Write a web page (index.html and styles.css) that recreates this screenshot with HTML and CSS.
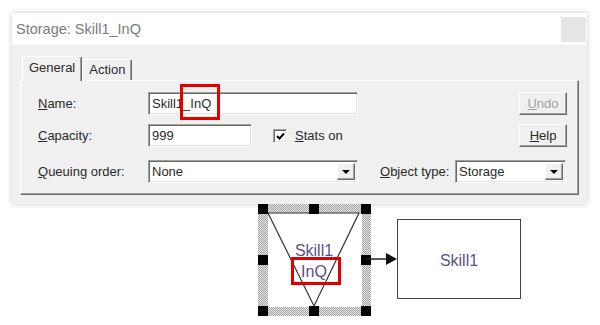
FILE: index.html
```html
<!DOCTYPE html>
<html lang="en">
<head>
  <meta charset="UTF-8" />
  <title>Storage: Skill1_InQ</title>
  <link rel="stylesheet" href="styles.css">
</head>
<body>
  <div class="window">
    <div class="titlebar">
      <span class="title">Storage: Skill1_InQ</span>
      <span class="close"></span>
    </div>
    <div class="dialog">
      <div class="tabs">
        <div class="tab active">General</div>
        <div class="tab">Action</div>
      </div>
      <div class="panel">
        <div class="row">
          <span class="lbl"><u>N</u>ame:</span>
          <div class="field wide">
            <span class="val">Skill1_InQ</span>
            <span class="mark"></span>
          </div>
          <button class="btn disabled"><u>U</u>ndo</button>
        </div>
        <div class="row row2">
          <span class="lbl"><u>C</u>apacity:</span>
          <div class="field short"><span class="val">999</span></div>
          <span class="check">
            <svg width="9" height="8" viewBox="0 0 9 8"><polyline points="1,4 3.5,6.5 8,1.5" fill="none" stroke="#000" stroke-width="2"/></svg>
          </span>
          <span class="checklbl"><u>S</u>tats on</span>
          <button class="btn"><u>H</u>elp</button>
        </div>
        <div class="row row3">
          <span class="lbl"><u>Q</u>ueuing order:</span>
          <div class="field wide select">
            <span class="val">None</span>
            <span class="drop"></span>
          </div>
          <span class="lbl2"><u>O</u>bject type:</span>
          <div class="field type select">
            <span class="val">Storage</span>
            <span class="drop"></span>
          </div>
        </div>
      </div>
    </div>
  </div>

  <svg class="diagram" width="600" height="121" viewBox="0 204 600 121">
    <defs>
      <pattern id="dots" width="2" height="2" patternUnits="userSpaceOnUse">
        <rect width="2" height="2" fill="#e4e4e4"/>
        <rect width="1" height="1" fill="#a6a6a6"/>
        <rect x="1" y="1" width="1" height="1" fill="#a6a6a6"/>
      </pattern>
    </defs>
    <rect x="258" y="204" width="113" height="112" fill="url(#dots)"/>
    <rect x="268" y="213" width="94" height="94" fill="#fff"/>
    <polygon points="268,213 359,213 314,306" fill="none" stroke="#333" stroke-width="1.2"/>
    <rect x="258" y="204" width="10" height="10"/>
    <rect x="309" y="204" width="10" height="10"/>
    <rect x="361" y="204" width="10" height="10"/>
    <rect x="258" y="255" width="10" height="10"/>
    <rect x="361" y="255" width="10" height="10"/>
    <rect x="258" y="306" width="10" height="10"/>
    <rect x="309" y="306" width="10" height="10"/>
    <rect x="361" y="306" width="10" height="10"/>
    <text class="node" x="314" y="256">Skill1</text>
    <text class="node" x="314" y="277">InQ</text>
    <rect x="292.5" y="258.5" width="47" height="25" fill="none" stroke="#e00000" stroke-width="3"/>
    <line x1="366" y1="259" x2="388" y2="259" stroke="#222" stroke-width="1.5"/>
    <polygon points="386,253 397,259 386,265" fill="#111"/>
    <rect x="397.5" y="219.5" width="123" height="79" fill="#fff" stroke="#444"/>
    <text class="node" x="459" y="266">Skill1</text>
  </svg>
</body>
</html>
```

FILE: styles.css
```css
body {
  margin: 0;
  background: #fff;
  font-family: 'Liberation Sans', Arial, sans-serif;
  font-size: 13px;
  color: #2a2a2a;
}

.window {
  margin: 13px 0 0 12px;
  width: 575px;
  height: 191px;
  background: #f0f0f0;
  box-shadow: 0 0 6px rgba(0,0,0,0.2);
  display: flex;
  flex-direction: column;
}

.titlebar {
  height: 32px;
  background: #fff;
  display: flex;
  align-items: center;
  justify-content: space-between;
  padding-left: 4px;
}

.title {
  font-size: 14.5px;
  color: #7a7a7a;
}

.close {
  width: 25px;
  height: 25px;
  background: #e6e6e6;
  margin-right: 1px;
}

.dialog {
  flex: 1;
  padding: 11px 8px 9px 8px;
  display: flex;
  flex-direction: column;
}

.tabs {
  display: flex;
  align-items: flex-end;
  height: 24px;
  padding-left: 2px;
}

.tab {
  height: 21px;
  line-height: 20px;
  padding: 0 6px;
  border-left: 1px solid #fff;
  border-top: 1px solid #fff;
  border-right: 1px solid #696969;
  box-shadow: inset -1px 0 #a0a0a0;
  box-sizing: border-box;
  border-radius: 2px 2px 0 0;
}

.tab.active {
  height: 25px;
  line-height: 22px;
  padding: 0 6px;
  margin-bottom: -1px;
  background: #f0f0f0;
  position: relative;
  z-index: 1;
}

.panel {
  flex: 1;
  border: 1px solid;
  border-color: #fff #696969 #696969 #fff;
  box-shadow: inset -1px -1px #a0a0a0;
  padding: 11px 11px 11px 17px;
}

.row {
  display: flex;
  align-items: center;
  height: 23px;
}

.row2 {
  margin-top: 9px;
}

.row3 {
  margin-top: 13px;
}

.lbl {
  width: 110px;
}

.field {
  position: relative;
  height: 23px;
  box-sizing: border-box;
  background: #fff;
  border: 1px solid;
  border-color: #a0a0a0 #fff #fff #a0a0a0;
  box-shadow: inset 1px 1px #696969, inset -1px -1px #e3e3e3;
  display: flex;
  align-items: center;
  padding-left: 3px;
}

.field.wide {
  width: 210px;
}

.field.short {
  width: 104px;
}

.field.type {
  width: 111px;
}

.mark {
  position: absolute;
  left: 31px;
  top: -9px;
  width: 40px;
  height: 36px;
  box-sizing: border-box;
  border: 3px solid #e30000;
}

.drop {
  margin-left: auto;
  margin-right: 2px;
  width: 18px;
  height: 17px;
  box-sizing: border-box;
  background: #f0f0f0;
  border: 1px solid;
  border-color: #fff #696969 #696969 #fff;
  box-shadow: inset -1px -1px #a0a0a0;
  display: flex;
  align-items: center;
  justify-content: center;
}

.drop::after {
  content: '';
  border-left: 4px solid transparent;
  border-right: 4px solid transparent;
  border-top: 4px solid #000;
}

.check {
  margin-left: 21px;
  width: 14px;
  height: 14px;
  box-sizing: border-box;
  background: #fff;
  border: 1px solid;
  border-color: #a0a0a0 #fff #fff #a0a0a0;
  box-shadow: inset 1px 1px #696969, inset -1px -1px #e3e3e3;
  display: flex;
  align-items: center;
  justify-content: center;
}

.checklbl {
  margin-left: 8px;
}

.lbl2 {
  margin-left: 22px;
  width: 75px;
}

.btn {
  margin-left: auto;
  width: 48px;
  height: 23px;
  font: inherit;
  color: #2a2a2a;
  background: #f0f0f0;
  border: 1px solid;
  border-color: #fff #696969 #696969 #fff;
  box-shadow: inset -1px -1px #a0a0a0;
  padding: 0;
}

.btn.disabled {
  color: #a0a0a0;
}

.diagram {
  display: block;
}

.node {
  font-family: 'Liberation Sans', Arial, sans-serif;
  font-size: 16px;
  fill: #5c4f86;
  text-anchor: middle;
}
```
